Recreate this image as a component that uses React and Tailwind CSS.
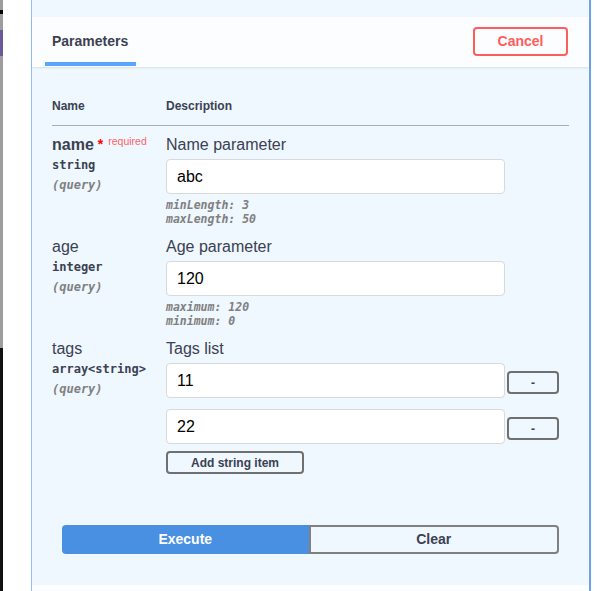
import React from 'react';

const sans = "font-['Liberation_Sans',Arial,sans-serif]";
const mono = "font-['DejaVu_Sans_Mono',monospace]";

const params = [
  {
    name: 'name',
    required: true,
    type: 'string',
    description: 'Name parameter',
    values: ['abc'],
    extensions: ['minLength: 3', 'maxLength: 50'],
  },
  {
    name: 'age',
    type: 'integer',
    description: 'Age parameter',
    values: ['120'],
    extensions: ['maximum: 120', 'minimum: 0'],
  },
  {
    name: 'tags',
    type: 'array<string>',
    description: 'Tags list',
    values: ['11', '22'],
    isArray: true,
  },
];

const TextInput = ({ value }) => (
  <input
    type="text"
    defaultValue={value}
    className="w-[339px] h-[35px] bg-white border border-[#d9d9d9] rounded-[4px] px-[10px] text-[16px] text-black outline-none"
  />
);

const ParamRow = ({ param, first }) => (
  <div className={`flex ${first ? 'pt-[9px]' : 'pt-[11px]'}`}>
    {/* name column */}
    <div className="w-[114px] shrink-0">
      <div className="h-[19px] leading-[19px] text-[16px] text-[#3b4151] flex items-start">
        <span className={param.required ? 'font-bold' : ''}>{param.name}</span>
        {param.required && (
          <>
            <span className="text-[#ff0000] font-bold ml-[4px] text-[14px]">*</span>
            <span className="text-[10.5px] leading-[12px] text-[#ff6566] ml-[5px]">required</span>
          </>
        )}
      </div>
      <div className={`${mono} mt-[4px] text-[12px] leading-[15px] font-bold text-[#3b4151]`}>{param.type}</div>
      <div className={`${mono} mt-[5px] text-[12px] leading-[15px] font-bold italic text-[#808080]`}>(query)</div>
    </div>

    {/* description column */}
    <div className="flex-1">
      <div className="h-[19px] leading-[19px] text-[16px] text-[#3b4151]">{param.description}</div>
      {param.isArray ? (
        <div className="mt-[5px] flex flex-col gap-[11px]">
          {param.values.map((v) => (
            <div key={v} className="flex items-start">
              <TextInput value={v} />
              <button className="ml-[2px] mt-[8px] w-[52px] h-[23px] border-2 border-[#707070] rounded-[4px] text-[12px] font-bold text-[#3b4151] leading-none">
                -
              </button>
            </div>
          ))}
          <button className="-mt-[4px] w-[138px] h-[23px] border-2 border-[#707070] rounded-[4px] text-[12px] font-bold text-[#3b4151] leading-none">
            Add string item
          </button>
        </div>
      ) : (
        <>
          <div className="mt-[5px]">
            <TextInput value={param.values[0]} />
          </div>
          <div className="mt-[4px]">
            {param.extensions.map((e) => (
              <div key={e} className={`${mono} text-[11.5px] leading-[14px] font-bold italic text-[#808080]`}>{e}</div>
            ))}
          </div>
        </>
      )}
    </div>
  </div>
);

export default function App() {
  return (
    <div className={`${sans} w-[612px] h-[591px] flex bg-white overflow-hidden`}>
      {/* screen edge */}
      <div className="w-[3px] flex flex-col shrink-0">
        <div className="h-[10px] bg-[#9d9d9d]" />
        <div className="h-[4px] bg-black" />
        <div className="h-[16px] bg-[#9d9d9d]" />
        <div className="h-[26px] bg-[#6b5a9a]" />
        <div className="h-[292px] bg-[#9d9d9d]" />
        <div className="flex-1 bg-[#111]" />
      </div>
      <div className="w-[28px] shrink-0" />

      {/* opblock panel */}
      <div className="w-[560px] shrink-0 flex flex-col bg-[#eff7ff] border-l border-l-[#8fc0f5] border-r-2 border-r-[#6aa3ec]">
        <div className="h-[17px]" />

        {/* section header */}
        <div className="h-[50px] flex items-start justify-between bg-[#fbfdff] shadow-[0_1px_2px_rgba(0,0,0,0.1)] relative">
          <div className="ml-[13px] flex flex-col">
            <div className="pt-[16px] px-[7px] h-[33px] leading-[17px] text-[14px] font-bold text-[#3b4151]">Parameters</div>
            <div className="mt-[12px] w-[91px] h-[4px] bg-[#5aa6fb]" />
          </div>
          <button className="mt-[10px] mr-[21px] w-[95px] h-[29px] border-2 border-[#ff5c5c] rounded-[4px] text-[14px] font-bold text-[#ff5c5c] bg-transparent">
            Cancel
          </button>
        </div>

        {/* parameters table */}
        <div className="px-[20px]">
          <div className="pt-[32px] pb-[11px] flex border-b border-[#a9adb5] text-[12px] leading-[15px] font-bold text-[#3b4151]">
            <div className="w-[114px]">Name</div>
            <div>Description</div>
          </div>
          {params.map((p, i) => (
            <ParamRow key={p.name} param={p} first={i === 0} />
          ))}
        </div>

        {/* execute / clear */}
        <div className="mt-[51px] px-[30px] flex">
          <button className="flex-1 h-[29px] bg-[#4990e2] rounded-l-[4px] text-[14px] font-bold text-white">
            Execute
          </button>
          <button className="flex-1 h-[29px] border-2 border-[#808080] rounded-r-[4px] text-[14px] font-bold text-[#3b4151] bg-transparent">
            Clear
          </button>
        </div>

        <div className="flex-1" />
        <div className="h-[6px] bg-[#fbfdff]" />
      </div>
    </div>
  );
}
